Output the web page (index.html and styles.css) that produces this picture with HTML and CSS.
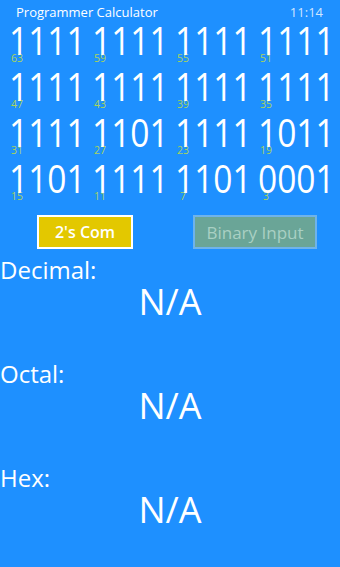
FILE: index.html
```html
<!DOCTYPE html>
<html lang="en">
<head>
  <meta charset="UTF-8">
  <title>Programmer Calculator</title>
  <meta name="viewport" content="width=device-width, initial-scale=1.0">
  <link rel="stylesheet" href="styles.css">
</head>
<body>
  <div class="header">
    <span class="title">Programmer Calculator</span>
    <span class="clock">11:14</span>
  </div>

  <div class="bits">
    <div class="nibble"><span class="digits">1111</span><span class="pos">63</span></div>
    <div class="nibble"><span class="digits">1111</span><span class="pos">59</span></div>
    <div class="nibble"><span class="digits">1111</span><span class="pos">55</span></div>
    <div class="nibble"><span class="digits">1111</span><span class="pos">51</span></div>

    <div class="nibble"><span class="digits">1111</span><span class="pos">47</span></div>
    <div class="nibble"><span class="digits">1111</span><span class="pos">43</span></div>
    <div class="nibble"><span class="digits">1111</span><span class="pos">39</span></div>
    <div class="nibble"><span class="digits">1111</span><span class="pos">35</span></div>

    <div class="nibble"><span class="digits">1111</span><span class="pos">31</span></div>
    <div class="nibble"><span class="digits">1101</span><span class="pos">27</span></div>
    <div class="nibble"><span class="digits">1111</span><span class="pos">23</span></div>
    <div class="nibble"><span class="digits">1011</span><span class="pos">19</span></div>

    <div class="nibble"><span class="digits">1101</span><span class="pos">15</span></div>
    <div class="nibble"><span class="digits">1111</span><span class="pos">11</span></div>
    <div class="nibble"><span class="digits">1101</span><span class="pos">7</span></div>
    <div class="nibble"><span class="digits">0001</span><span class="pos">3</span></div>
  </div>

  <div class="actions">
    <button class="btn btn-com">2's Com</button>
    <button class="btn btn-input">Binary Input</button>
  </div>

  <div class="result">
    <div class="result-label">Decimal:</div>
    <div class="result-value">N/A</div>
  </div>
  <div class="result">
    <div class="result-label">Octal:</div>
    <div class="result-value">N/A</div>
  </div>
  <div class="result">
    <div class="result-label">Hex:</div>
    <div class="result-value">N/A</div>
  </div>
</body>
</html>
```

FILE: styles.css
```css
* { box-sizing: border-box; }

body {
  margin: 0;
  font-family: 'Open Sans', 'Noto Sans', sans-serif;
  background-color: #1e90ff;
  color: #fff;
  height: 567px;
  overflow: hidden;
}

.header {
  display: flex;
  justify-content: space-between;
  height: 25px;
  padding: 1px 17px 0 16px;
  font-size: 13px;
  line-height: 22px;
}

.clock {
  color: rgba(255, 255, 255, 0.8);
}

.bits {
  display: grid;
  grid-template-columns: repeat(4, 83px);
  row-gap: 9px;
  padding-left: 9px;
}

.nibble {
  display: flex;
  flex-direction: column;
}

.digits {
  display: inline-block;
  font-size: 39px;
  line-height: 30px;
  transform: scaleX(0.86);
  transform-origin: left center;
  white-space: nowrap;
}

.pos {
  width: 16px;
  text-align: center;
  font-size: 10.5px;
  line-height: 7px;
  color: #a8d35c;
}

.actions {
  display: flex;
  gap: 60px;
  margin-top: 15px;
  margin-bottom: 7px;
  padding-left: 37px;
}

.btn {
  height: 34px;
  padding: 0;
  font-family: 'Open Sans', 'Noto Sans', sans-serif;
  font-size: 16px;
  border-radius: 0;
  cursor: pointer;
}

.btn-com {
  width: 96px;
  background: #e3c800;
  border: 2px solid #fff;
  color: #fff;
  font-weight: 600;
}

.btn-input {
  width: 124px;
  background: #6aa597;
  border: 2px solid #6fb3ea;
  color: #a9d0c3;
  font-size: 17px;
}

.result {
  margin-bottom: 40px;
}

.result-label {
  font-size: 24px;
  line-height: 28px;
}

.result-value {
  text-align: center;
  font-size: 36px;
  line-height: 36px;
}
```
